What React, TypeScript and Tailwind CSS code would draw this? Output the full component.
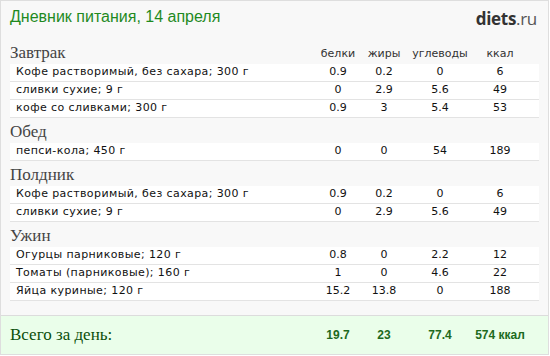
import React from "react";

type Item = { name: string; p: string; f: string; c: string; k: string };
type Section = { title: string; items: Item[] };

const sections: Section[] = [
  {
    title: "Завтрак",
    items: [
      { name: "Кофе растворимый, без сахара; 300 г", p: "0.9", f: "0.2", c: "0", k: "6" },
      { name: "сливки сухие; 9 г", p: "0", f: "2.9", c: "5.6", k: "49" },
      { name: "кофе со сливками; 300 г", p: "0.9", f: "3", c: "5.4", k: "53" },
    ],
  },
  {
    title: "Обед",
    items: [{ name: "пепси-кола; 450 г", p: "0", f: "0", c: "54", k: "189" }],
  },
  {
    title: "Полдник",
    items: [
      { name: "Кофе растворимый, без сахара; 300 г", p: "0.9", f: "0.2", c: "0", k: "6" },
      { name: "сливки сухие; 9 г", p: "0", f: "2.9", c: "5.6", k: "49" },
    ],
  },
  {
    title: "Ужин",
    items: [
      { name: "Огурцы парниковые; 120 г", p: "0.8", f: "0", c: "2.2", k: "12" },
      { name: "Томаты (парниковые); 160 г", p: "1", f: "0", c: "4.6", k: "22" },
      { name: "Яйца куриные; 120 г", p: "15.2", f: "13.8", c: "0", k: "188" },
    ],
  },
];

const grid = "grid grid-cols-[1fr_46px_46px_66px_66px]";

export default function App() {
  return (
    <div className="w-[549px] h-[355px] border border-[#dedede] bg-[#f8f8f8] flex flex-col overflow-hidden">
      <div className="h-[38px] flex items-start justify-between pl-[9px] pr-[11px] pt-[6px]">
        <div className="text-[16px] leading-[20px] text-[#1f8a1f] font-['Liberation_Sans',sans-serif]">
          Дневник питания, 14 апреля
        </div>
        <div className="text-[17px] leading-[20px] pt-[2px] font-['Open_Sans',sans-serif] tracking-[-0.3px]">
          <span className="font-bold text-[#333]">diets</span>
          <span className="text-[#555]">.ru</span>
        </div>
      </div>
      <div className="flex flex-col">
        {sections.map((s, si) => (
          <div key={si} className="flex flex-col">
            <div className={`${grid} h-[25px] items-end mx-[9px] pb-[1px]`}>
              <div className="text-[17px] leading-[20px] text-[#444] font-['Liberation_Serif',serif]">
                {s.title}
              </div>
              {si === 0 && (
                <>
                  <div className="text-center text-[11px] leading-[18px] text-[#333] font-['DejaVu_Sans',sans-serif]">белки</div>
                  <div className="text-center text-[11px] leading-[18px] text-[#333] font-['DejaVu_Sans',sans-serif]">жиры</div>
                  <div className="text-center text-[11px] leading-[18px] text-[#333] font-['DejaVu_Sans',sans-serif]">углеводы</div>
                  <div className="text-center text-[11px] leading-[18px] text-[#333] font-['DejaVu_Sans',sans-serif] pr-[12px]">ккал</div>
                </>
              )}
            </div>
            {s.items.map((it, ii) => (
              <div
                key={ii}
                className={`${grid} h-[18px] items-center mx-[9px] bg-white border-b border-[#e3e3e3] text-[11px] text-[#111] font-['DejaVu_Sans',sans-serif]`}
              >
                <div className="pl-[6px] tracking-[0.4px] whitespace-nowrap">{it.name}</div>
                <div className="text-center">{it.p}</div>
                <div className="text-center">{it.f}</div>
                <div className="text-center">{it.c}</div>
                <div className="text-center pr-[12px]">{it.k}</div>
              </div>
            ))}
          </div>
        ))}
      </div>
      <div className="mt-[14px] h-[40px] border-t border-[#dcdcdc] bg-[#eafeea] flex items-center">
        <div className={`${grid} w-full items-center px-[9px]`}>
          <div className="text-[17px] leading-[20px] text-[#0b4f0b] font-['Liberation_Serif',serif]">
            Всего за день:
          </div>
          <div className="text-center text-[12px] font-bold text-[#1d6a1d] font-['Liberation_Sans',sans-serif]">19.7</div>
          <div className="text-center text-[12px] font-bold text-[#1d6a1d] font-['Liberation_Sans',sans-serif]">23</div>
          <div className="text-center text-[12px] font-bold text-[#1d6a1d] font-['Liberation_Sans',sans-serif]">77.4</div>
          <div className="text-center text-[12px] font-bold text-[#1d6a1d] font-['Liberation_Sans',sans-serif] pr-[12px]">574 ккал</div>
        </div>
      </div>
    </div>
  );
}
